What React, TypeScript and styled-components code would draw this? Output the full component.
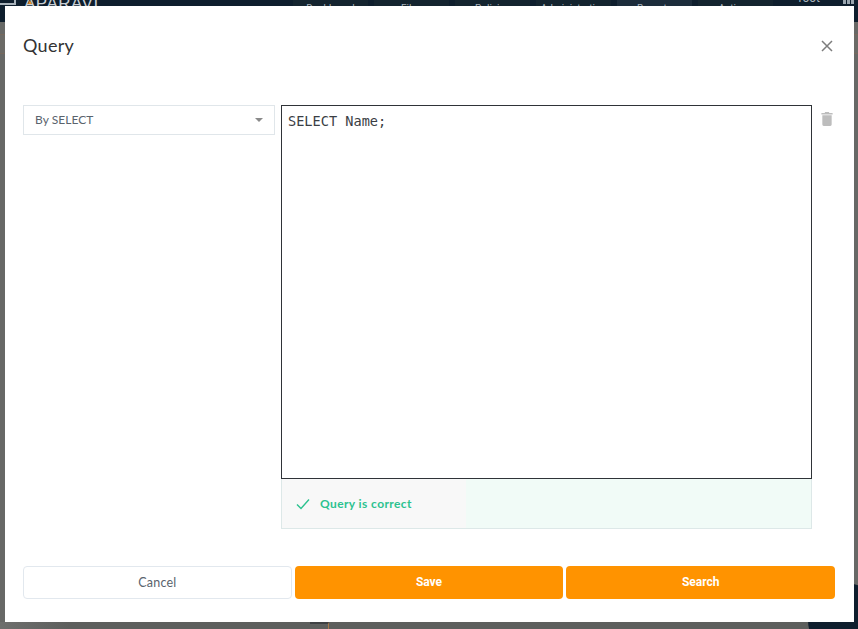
import { ReactElement } from 'react';
import styled, { createGlobalStyle } from 'styled-components';

const GlobalStyle = createGlobalStyle`
  html, body {
    margin: 0;
    padding: 0;
    height: 100%;
    overflow: hidden;
    background: #666;
  }
`;

const Page = styled.div`
  position: relative;
  display: flex;
  flex-direction: column;
  width: 858px;
  height: 629px;
  overflow: hidden;
  background: #676866;
  font-family: 'Lato', 'Open Sans', sans-serif;
`;

const TopBar = styled.div`
  display: flex;
  align-items: flex-start;
  height: 22px;
  flex-shrink: 0;
  background: #0e1e2d;
  color: #a9b3bb;
  overflow: hidden;
`;

const Logo = styled.div`
  display: flex;
  align-items: flex-start;
  gap: 8px;
  width: 293px;
  flex-shrink: 0;
  font-family: 'Liberation Sans', sans-serif;
  font-size: 17px;
  line-height: 20px;
  letter-spacing: 0.5px;
  color: #c9ced3;
`;

const LogoName = styled.span`
  position: relative;
  margin-top: -6px;
`;

const LogoAccent = styled.span`
  position: absolute;
  left: 4px;
  top: 6px;
  width: 0;
  height: 0;
  border-left: 2px solid transparent;
  border-right: 2px solid transparent;
  border-bottom: 4px solid #e8902a;
`;

const NavTab = styled.div<{ $active?: boolean }>`
  width: 75px;
  height: 22px;
  flex-shrink: 0;
  margin-right: 6px;
  background: ${(p) => (p.$active ? '#1c2c3b' : '#14242f')};
  text-align: center;
  font-family: 'Roboto', sans-serif;
  font-size: 10px;
  line-height: 18px;
`;

const UserName = styled.div`
  margin-left: auto;
  margin-right: 23px;
  margin-top: -11px;
  font-family: 'Roboto', sans-serif;
  font-size: 12px;
  line-height: 18px;
`;

const AppMenu = styled.div`
  display: flex;
  gap: 1px;
  width: 15px;
  flex-shrink: 0;
`;

const AppMenuDot = styled.span`
  width: 3px;
  height: 4px;
  background: #9aa5ae;
`;

const ContentRow = styled.div`
  height: 18px;
  margin-top: 12px;
  border-top: 1px solid #76685c;
  border-bottom: 1px solid #76685c;
  background: #6b6a66;
`;

const BottomStrip = styled.div`
  display: flex;
  height: 7px;
  margin-top: auto;
  padding-left: 310px;
  background: linear-gradient(90deg, #6e6f6d 0, #5d5f5d 70px);
`;

const BottomMark = styled.span`
  width: 19px;
  height: 7px;
  box-sizing: border-box;
  border-top: 2px solid #3f4143;
  border-right: 1px solid #a8794a;
`;

const ChatBubble = styled.div`
  position: absolute;
  right: -24px;
  bottom: -28px;
  width: 74px;
  height: 74px;
  border-radius: 50%;
  background: #0e1e2d;
`;

const Dialog = styled.div`
  position: absolute;
  left: 5px;
  top: 6px;
  width: 849px;
  height: 616px;
  box-sizing: border-box;
  padding: 0 19px 23px 18px;
  display: flex;
  flex-direction: column;
  background: #fff;
`;

const DialogHeader = styled.div`
  display: flex;
  align-items: center;
  justify-content: space-between;
  height: 80px;
  flex-shrink: 0;
`;

const Title = styled.h2`
  margin: -2px 0 0;
  font-size: 18px;
  font-weight: 400;
  letter-spacing: 0.3px;
  color: #333;
`;

const CloseButton = styled.button`
  display: flex;
  padding: 0;
  margin-right: 2px;
  border: 0;
  background: none;
  color: #7d7d7d;
`;

const DialogBody = styled.div`
  display: flex;
  align-items: flex-start;
  margin-top: 19px;
  flex: 1;
`;

const Select = styled.div`
  display: flex;
  align-items: center;
  justify-content: space-between;
  width: 252px;
  height: 30px;
  box-sizing: border-box;
  padding: 0 11px 2px;
  margin-right: 6px;
  border: 1px solid #e0e6ea;
  font-size: 12px;
  letter-spacing: 0.05px;
  color: #5a636d;
`;

const Caret = styled.span`
  width: 0;
  height: 0;
  margin-top: 2px;
  border-left: 4px solid transparent;
  border-right: 4px solid transparent;
  border-top: 4px solid #8a8a8a;
`;

const EditorColumn = styled.div`
  display: flex;
  flex-direction: column;
  width: 531px;
`;

const Editor = styled.div`
  height: 374px;
  box-sizing: border-box;
  padding: 6px;
  border: 1px solid #2f3338;
  font-family: 'DejaVu Sans Mono', monospace;
  font-size: 13.6px;
  line-height: 18px;
  color: #3a3e44;
`;

const Status = styled.div`
  display: flex;
  height: 50px;
  box-sizing: border-box;
  border: 1px solid #dde8e8;
  border-top: 0;
  background: #f1fbf7;
`;

const StatusLabel = styled.div`
  display: flex;
  align-items: center;
  gap: 10px;
  width: 184px;
  box-sizing: border-box;
  padding-left: 14px;
  background: #f8f8f8;
  color: #2cc28f;
  font-size: 12px;
  font-weight: 700;
  letter-spacing: 0.4px;
`;

const TrashButton = styled.button`
  display: flex;
  padding: 0;
  margin: 7px 0 0 9px;
  border: 0;
  background: none;
  color: #bdbdbd;
`;

const DialogFooter = styled.div`
  display: grid;
  grid-template-columns: repeat(3, 1fr);
  column-gap: 3px;
  flex-shrink: 0;
`;

const CancelButton = styled.button`
  height: 33px;
  border: 1px solid #e2e8ee;
  border-radius: 4px;
  background: #fff;
  font-family: 'Lato', sans-serif;
  font-size: 12.5px;
  letter-spacing: 0.2px;
  color: #5a636d;
`;

const PrimaryButton = styled.button`
  height: 33px;
  padding-bottom: 2px;
  border: 0;
  border-radius: 4px;
  background: #ff9300;
  font-family: 'Roboto', sans-serif;
  font-size: 12px;
  font-weight: 700;
  color: #fff;
`;

const App = (): ReactElement => {
  return (
    <Page>
      <GlobalStyle />
      <TopBar>
        <Logo>
          <svg width="16" height="6" viewBox="0 0 16 6" fill="none" stroke="#a9b3bb" strokeWidth="2">
            <path d="M0 4h15V0" />
          </svg>
          <LogoName>
            APARAVI
            <LogoAccent />
          </LogoName>
        </Logo>
        <NavTab>Dashboard</NavTab>
        <NavTab>Files</NavTab>
        <NavTab>Policies</NavTab>
        <NavTab>Administration</NavTab>
        <NavTab $active>Reports</NavTab>
        <NavTab>Actions</NavTab>
        <UserName>root</UserName>
        <AppMenu>
          <AppMenuDot />
          <AppMenuDot />
          <AppMenuDot />
        </AppMenu>
      </TopBar>
      <ContentRow />
      <BottomStrip>
        <BottomMark />
      </BottomStrip>
      <ChatBubble />
      <Dialog>
        <DialogHeader>
          <Title>Query</Title>
          <CloseButton aria-label="Close">
            <svg width="12" height="12" viewBox="0 0 12 12" fill="none" stroke="currentColor" strokeWidth="1.5">
              <path d="M1 1l10 10M11 1L1 11" />
            </svg>
          </CloseButton>
        </DialogHeader>
        <DialogBody>
          <Select>
            By SELECT
            <Caret />
          </Select>
          <EditorColumn>
            <Editor>SELECT Name;</Editor>
            <Status>
              <StatusLabel>
                <svg width="14" height="12" viewBox="0 0 14 12" fill="none" stroke="currentColor" strokeWidth="1.4">
                  <path d="M1 6.5l4 4L13 1.5" />
                </svg>
                Query is correct
              </StatusLabel>
            </Status>
          </EditorColumn>
          <TrashButton aria-label="Delete">
            <svg width="12" height="14" viewBox="0 0 12 15" fill="currentColor">
              <path d="M4 0h4l.6 1H12v1.6H0V1h3.4L4 0zM1 3.6h10V13.5A1.5 1.5 0 0 1 9.5 15h-7A1.5 1.5 0 0 1 1 13.5V3.6z" />
            </svg>
          </TrashButton>
        </DialogBody>
        <DialogFooter>
          <CancelButton>Cancel</CancelButton>
          <PrimaryButton>Save</PrimaryButton>
          <PrimaryButton>Search</PrimaryButton>
        </DialogFooter>
      </Dialog>
    </Page>
  );
};

export default App;
